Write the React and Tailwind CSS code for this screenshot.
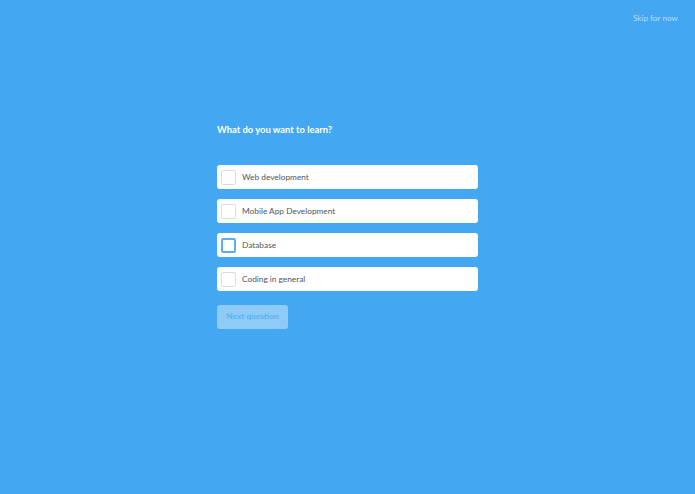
import React, { useState } from "react";

const options = ["Web development", "Mobile App Development", "Database", "Coding in general"];

export default function App() {
  const [focused] = useState(2);
  const [checked, setChecked] = useState([]);

  const toggle = (i) =>
    setChecked((c) => (c.includes(i) ? c.filter((x) => x !== i) : [...c, i]));

  return (
    <div
      className="w-full h-[494px] bg-[#43a7f2] overflow-hidden"
      style={{ fontFamily: 'Lato, "Open Sans", sans-serif' }}
    >
      {/* Top bar */}
      <div className="flex justify-end pt-[12px] pr-[17px]">
        <button className="text-[8.2px] leading-[13px] text-[#b6def9]">Skip for now</button>
      </div>

      {/* Question */}
      <div className="w-[261px] mx-auto mt-[98px]">
        <h1 className="text-[9.4px] leading-[14px] font-bold text-white">What do you want to learn?</h1>

        <div className="mt-[28px] flex flex-col gap-[10px]">
          {options.map((o, i) => (
            <label
              key={o}
              onClick={() => toggle(i)}
              className="h-[24px] bg-white rounded-[3px] flex items-center pl-[4px] gap-[6px] cursor-pointer"
            >
              {i === focused ? (
                <span className="w-[15px] h-[15px] rounded-[2px] bg-white border-2 border-solid border-[#5aaff0]" />
              ) : (
                <span className="w-[15px] h-[15px] rounded-[2px] bg-white border border-solid border-[#dcdcdc]" />
              )}
              <span className="text-[8.3px] text-[#4f5660]">{o}</span>
            </label>
          ))}
        </div>

        <button className="mt-[14px] w-[71px] h-[24px] rounded-[3px] bg-[#8fcbf7] text-[8.3px] font-bold text-[#5cb2f0] pb-[1px]">
          Next question
        </button>
      </div>
    </div>
  );
}
